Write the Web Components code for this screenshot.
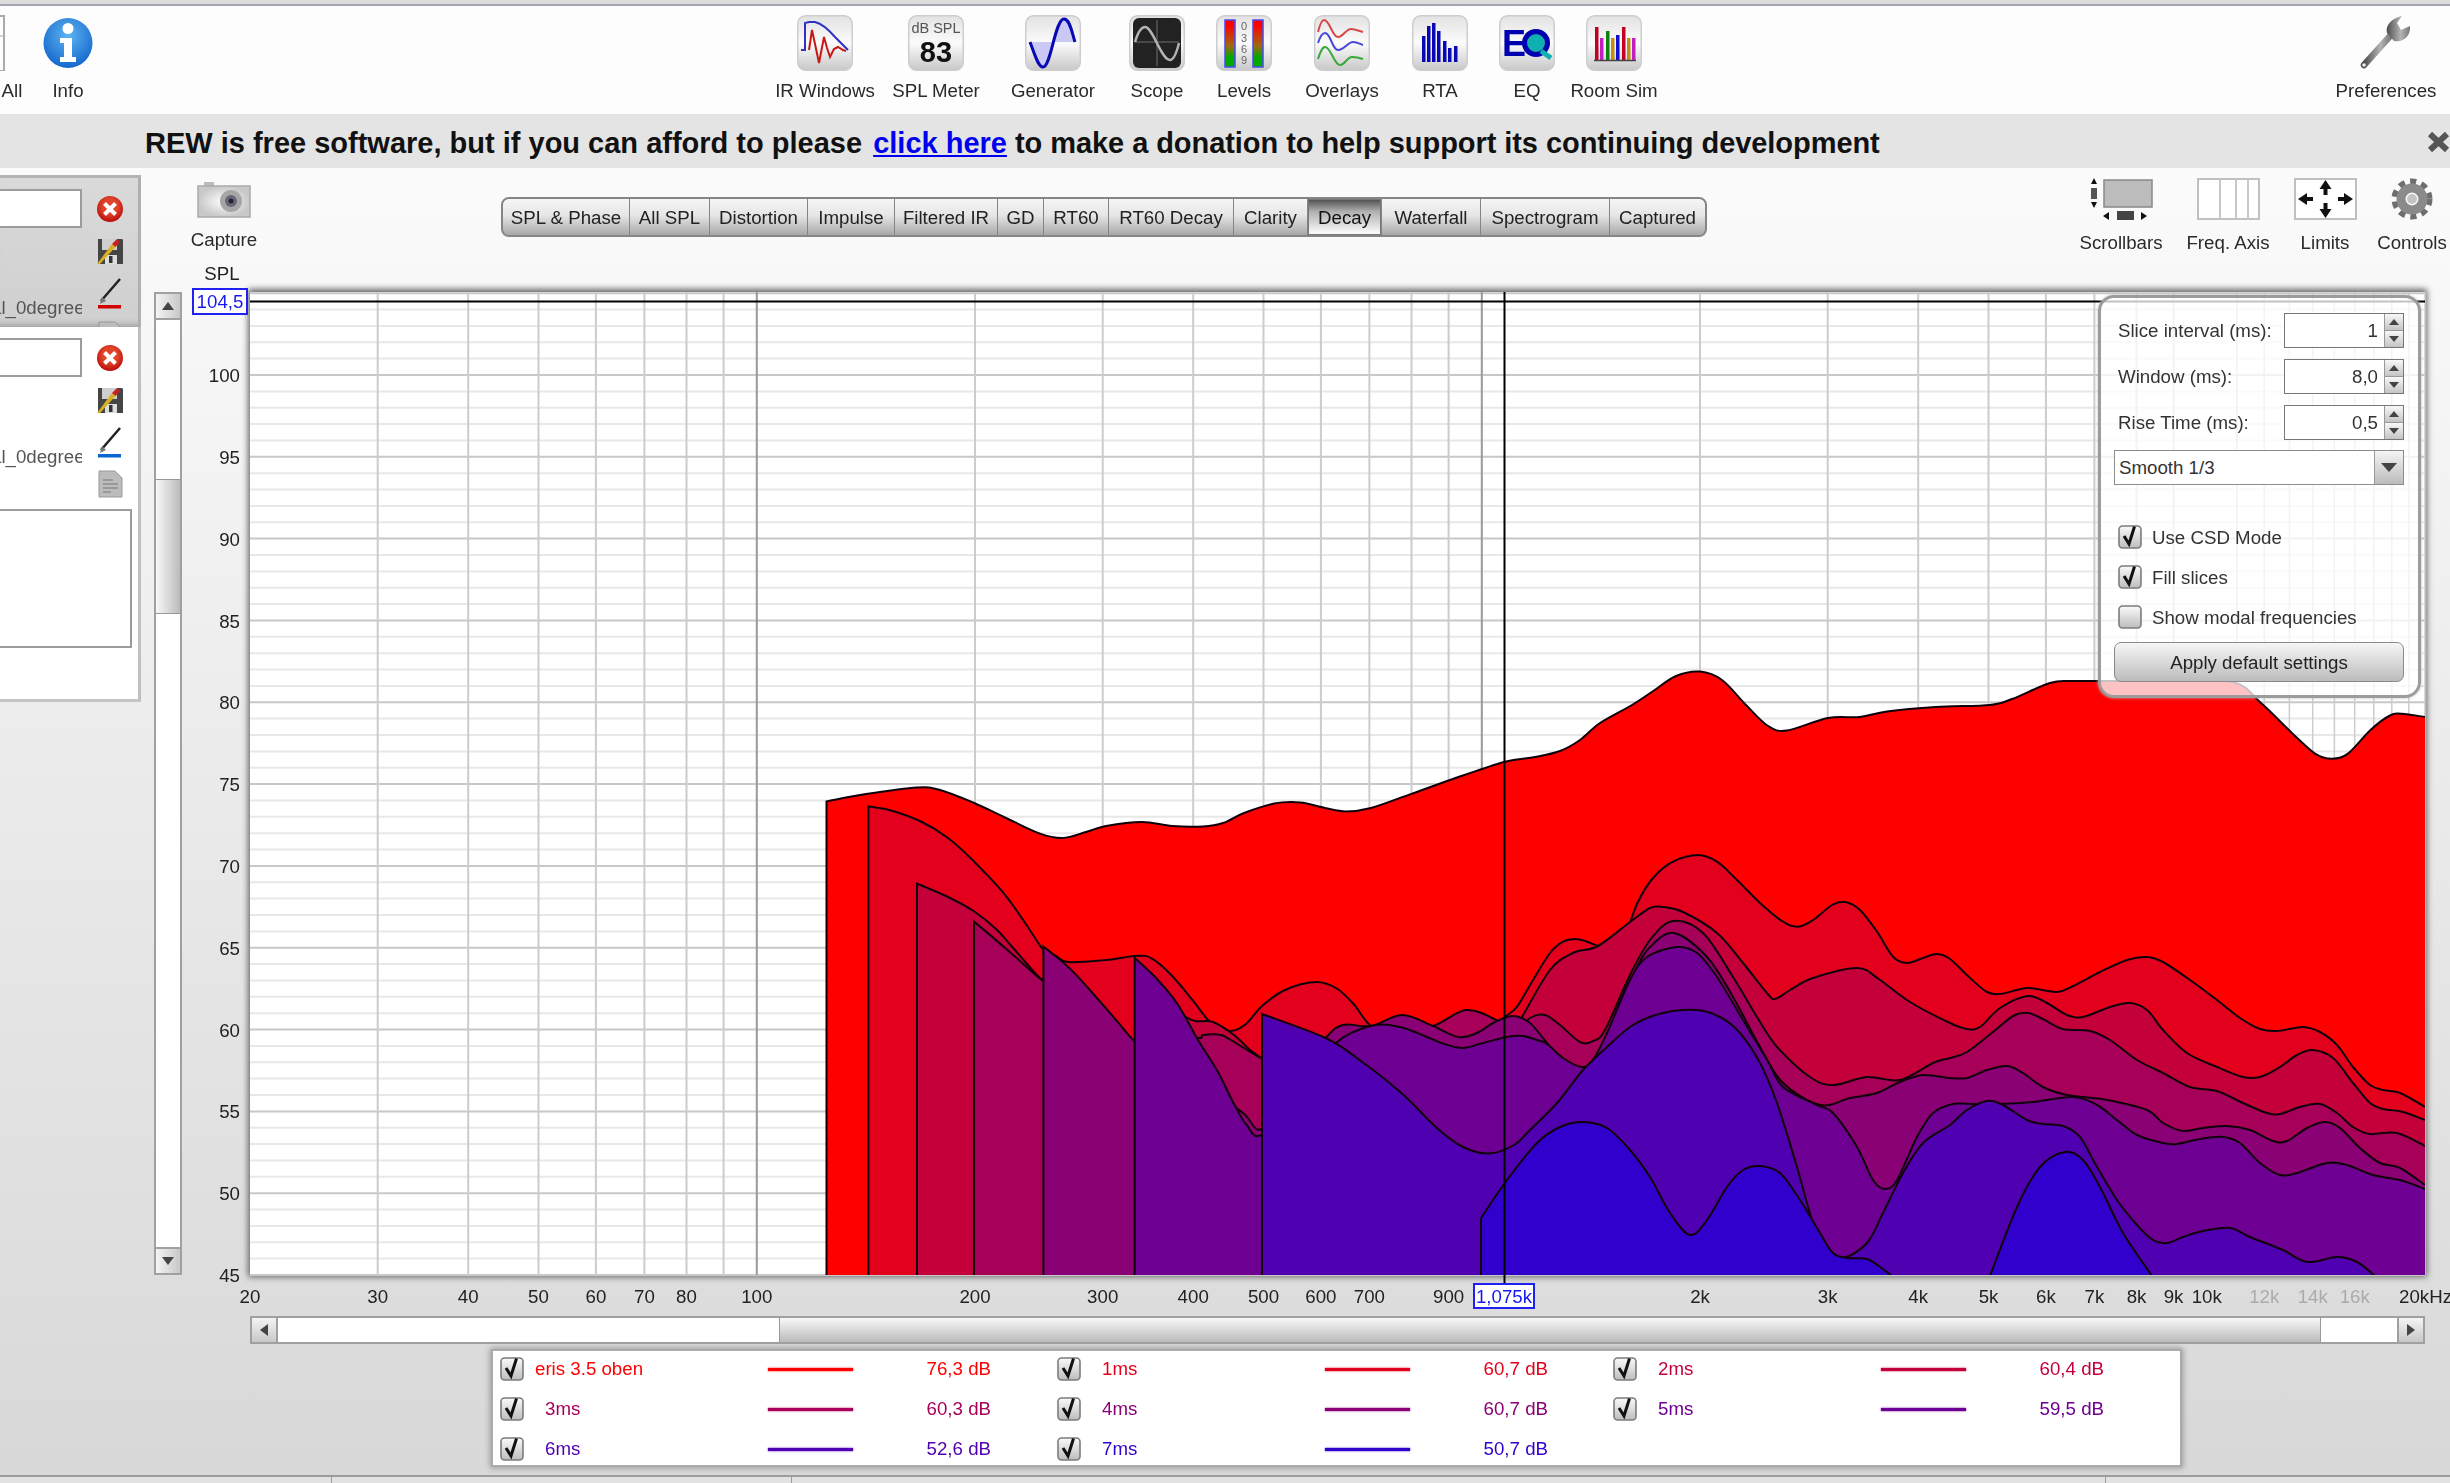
<!DOCTYPE html>
<html>
<head>
<meta charset="utf-8">
<title>REW</title>
<style>
  html, body { margin: 0; padding: 0; }
  body {
    width: 2450px; height: 1483px; overflow: hidden;
    font: 18.7px "Liberation Sans", Arial, sans-serif; color: #2a2a2a;
    background: #dcdcdc;
    filter: blur(.45px);
  }
  #main { display: flex; height: 1307px; background: linear-gradient(#fbfbfb, #d8d8d8); }
  #side { width: 154px; flex: none; padding-top: 7px; box-sizing: border-box; overflow: hidden; }
  #work { flex: 1; display: flex; flex-direction: column; min-width: 0; }
  #head { display: flex; height: 102px; flex: none; align-items: flex-start; }
  #chart-row { display: flex; height: 1046px; flex: none; }
</style>
</head>
<body>
<rew-toolbar>
  <rew-tool label="All" icon="all" w="62" gap="9" style="margin-left:-19px"></rew-tool>
  <rew-tool label="Info" icon="info" w="50" gap="9"></rew-tool>
  <rew-tool label="IR Windows" icon="ir" w="120" gap="9" style="margin-left:672px"></rew-tool>
  <rew-tool label="SPL Meter" icon="spl" w="102" gap="9"></rew-tool>
  <rew-tool label="Generator" icon="gen" w="132" gap="9"></rew-tool>
  <rew-tool label="Scope" icon="scope" w="76" gap="9"></rew-tool>
  <rew-tool label="Levels" icon="levels" w="98" gap="9"></rew-tool>
  <rew-tool label="Overlays" icon="overlays" w="98" gap="9"></rew-tool>
  <rew-tool label="RTA" icon="rta" w="98" gap="9"></rew-tool>
  <rew-tool label="EQ" icon="eq" w="76" gap="9"></rew-tool>
  <rew-tool label="Room Sim" icon="room" w="98" gap="9"></rew-tool>
  <rew-tool label="Preferences" icon="wrench" w="104" gap="9" style="margin-left:auto;margin-right:12px"></rew-tool>
</rew-toolbar>
<rew-banner></rew-banner>
<div id="main">
  <div id="side">
    <rew-measure pen="#d40000" style="height:152px"></rew-measure>
    <rew-measure pen="#0a66d0" selected style="height:375px"></rew-measure>
  </div>
  <div id="work">
    <div id="head">
      <rew-tool label="Capture" icon="camera" w="70" gap="11" style="margin:14px 0 0 35px"></rew-tool>
      <rew-tabs style="margin:29px 0 0 242px">
        <rew-tab w="129">SPL &amp; Phase</rew-tab>
        <rew-tab w="80">All SPL</rew-tab>
        <rew-tab w="98">Distortion</rew-tab>
        <rew-tab w="87">Impulse</rew-tab>
        <rew-tab w="103">Filtered IR</rew-tab>
        <rew-tab w="46">GD</rew-tab>
        <rew-tab w="65">RT60</rew-tab>
        <rew-tab w="125">RT60 Decay</rew-tab>
        <rew-tab w="74">Clarity</rew-tab>
        <rew-tab w="74" selected>Decay</rew-tab>
        <rew-tab w="99">Waterfall</rew-tab>
        <rew-tab w="129">Spectrogram</rew-tab>
        <rew-tab w="97">Captured</rew-tab>
      </rew-tabs>
      <rew-tool label="Scrollbars" icon="scrollbars" w="106" gap="12" style="margin:10px 0 0 361px"></rew-tool>
      <rew-tool label="Freq. Axis" icon="freq" w="108" gap="12" style="margin-top:10px"></rew-tool>
      <rew-tool label="Limits" icon="limits" w="86" gap="12" style="margin-top:10px"></rew-tool>
      <rew-tool label="Controls" icon="gear" w="76" gap="12" style="margin:10px 0 0 6px"></rew-tool>
    </div>
    <div id="chart-row">
      <rew-scrollbar dir="v" before="159" thumb="135" style="margin-top:22px"></rew-scrollbar>
      <rew-chart>
        <rew-settings></rew-settings>
      </rew-chart>
    </div>
    <rew-scrollbar dir="h" before="501" thumb="1542" style="margin-left:96px"></rew-scrollbar>
    <rew-legend style="margin:7px 0 0 339px">
      <rew-trace name="eris 3.5 oben" value="76,3 dB" color="#ff0000" pad="11"></rew-trace>
      <rew-trace name="1ms" value="60,7 dB" color="#e2001d"></rew-trace>
      <rew-trace name="2ms" value="60,4 dB" color="#c4003b"></rew-trace>
      <rew-trace name="3ms" value="60,3 dB" color="#a70058"></rew-trace>
      <rew-trace name="4ms" value="60,7 dB" color="#8a0075"></rew-trace>
      <rew-trace name="5ms" value="59,5 dB" color="#6d0092"></rew-trace>
      <rew-trace name="6ms" value="52,6 dB" color="#4f00b0"></rew-trace>
      <rew-trace name="7ms" value="50,7 dB" color="#3200cd"></rew-trace>
    </rew-legend>
  </div>
</div>
<rew-status></rew-status>

<script>
    const tile = (inner, bg) => `<svg width="56" height="56" viewBox="0 0 56 56">
      <defs><linearGradient id="tg" x1="0" y1="0" x2="0" y2="1">
        <stop offset="0" stop-color="#e2e2e2"/><stop offset=".5" stop-color="#fbfbfb"/><stop offset="1" stop-color="#c8c8c8"/>
      </linearGradient></defs>
      <rect x=".75" y=".75" width="54.5" height="54.5" rx="8" fill="url(#tg)" stroke="#cdcdcd" stroke-width="1.5"/>${inner}</svg>`;

    const bars = (list) => list.map(b => `<rect x="${b[0]}" y="${b[1]}" width="${b[2]}" height="${b[3] - b[1]}" fill="${b[4]}"/>`).join('');

    const ICONS = {
        all: `<svg width="62" height="56"><rect x="-30" y="1" width="53" height="55" fill="#fdfdfd" stroke="#aaa" stroke-width="2"/><path d="M18 21h4" stroke="#aaa"/></svg>`,
        info: `<svg width="50" height="56" viewBox="0 0 50 56">
          <defs><radialGradient id="ib" cx=".5" cy=".35" r=".7"><stop offset="0" stop-color="#5db4f2"/><stop offset="1" stop-color="#0f62c9"/></radialGradient></defs>
          <ellipse cx="25" cy="28" rx="24.5" ry="25" fill="url(#ib)"/>
          <circle cx="25" cy="13.5" r="5.5" fill="#fff"/>
          <path d="M17 23h12v19h4v5H17v-5h4V28h-4z" fill="#fff"/></svg>`,
        ir: tile(`<path d="M4 35h4V8l4-1h6c8 2 14 8 20 15l13 13" fill="none" stroke="#3232c0" stroke-width="2"/>
          <path d="M12 35l3-20 3 14 4 19 5-26 3 11 3 9 4-8 4-2 5 3 3 1" fill="none" stroke="#c81818" stroke-width="2"/>`),
        spl: tile(`<text x="28" y="18" font-size="14.5" text-anchor="middle" fill="#555">dB SPL</text>
          <text x="28" y="47" font-size="29" font-weight="700" text-anchor="middle" fill="#111">83</text>`),
        gen: tile(`<path d="M5 27C10 40 13 52 18 52C26 52 30 4 39 4C45 4 47 18 50 27Z" fill="#c9c9f4"/>
          <path d="M5 27C10 40 13 52 18 52C26 52 30 4 39 4C45 4 47 18 50 27" fill="none" stroke="#0808b4" stroke-width="3"/>`),
        scope: tile(`<rect x="4" y="3" width="48" height="50" rx="6" fill="#222"/>
          <path d="M28 5v46M6 27h44" stroke="#555" stroke-width="1.5"/>
          <path d="M6 27C9 17 12 12 16 12C24 12 32 45 41 45C45 45 48 36 50 28" fill="none" stroke="#b4b4b4" stroke-width="2.5"/>`),
        levels: tile(`<defs><linearGradient id="lv" x1="0" y1="0" x2="0" y2="1"><stop offset=".1" stop-color="#ff0000"/><stop offset=".55" stop-color="#a06a10"/><stop offset=".8" stop-color="#00a800"/></linearGradient></defs>
          <rect x="9" y="5" width="10" height="47" fill="url(#lv)" stroke="#4a4af0" stroke-width="1.5"/>
          <rect x="37" y="5" width="10" height="47" fill="url(#lv)" stroke="#4a4af0" stroke-width="1.5"/>
          <g font-size="11" fill="#666" text-anchor="middle"><text x="28" y="15">0</text><text x="28" y="27">3</text><text x="28" y="38">6</text><text x="28" y="49">9</text></g>`),
        overlays: tile(`<g fill="none" stroke-width="2">
          <path d="M4 17C6 9 8 5 10 5C16 5 18 22 24 22C29 22 32 14 37 14C41 14 45 16 49 17" stroke="#d84848"/>
          <path d="M4 28C6 22 8 18 11 18C17 18 18 35 24 35C30 35 34 27 39 27C43 27 46 29 49 30" stroke="#4848d8"/>
          <path d="M4 44C6 38 8 32 11 32C17 32 20 50 26 50C31 50 33 42 38 42C42 42 46 43 49 44" stroke="#38a838"/></g>`),
        rta: tile(bars([[10,21,3.5,47,'#0808b4'],[15,11,3.5,47,'#0808b4'],[20,8,3.5,47,'#0808b4'],[25,16,3.5,47,'#0808b4'],[31,26,3.5,47,'#0808b4'],[36,33,3.5,47,'#0808b4'],[42,31,3.5,47,'#0808b4']])),
        eq: tile(`<text x="3" y="41" font-size="36" font-weight="700" fill="#0000b0">E</text>
          <circle cx="37" cy="28" r="11.5" fill="#10b0b0" stroke="#0000b0" stroke-width="5"/>
          <path d="M42 36l10 7" stroke="#10b0b0" stroke-width="5"/>`),
        room: tile(bars([[9,12,3.5,45,'#c00020'],[14,23,3.5,45,'#c020c0'],[20,16,3.5,45,'#108010'],[25,23,3.5,45,'#c09010'],[30,20,3.5,45,'#1010d0'],[36,12,3.5,45,'#c00020'],[41,23,3.5,45,'#c09010'],[46,23,3.5,45,'#c020c0']]) + `<path d="M8 45.5h42" stroke="#444" stroke-width="1.5"/>`),
        wrench: `<svg width="58" height="56" viewBox="0 0 58 56">
          <defs><linearGradient id="wr" x1="0" y1="0" x2="1" y2="0"><stop offset="0" stop-color="#4c4c4c"/><stop offset=".6" stop-color="#b4b4b4"/><stop offset="1" stop-color="#777"/></linearGradient></defs>
          <path d="M7 50L34 20" stroke="url(#wr)" stroke-width="6.5" stroke-linecap="round"/>
          <path d="M30 18C28 10 35 3 45 1L40 8L44 15L53 11C54 20 47 28 37 26Z" fill="url(#wr)"/>
          <circle cx="7" cy="50" r="1.8" fill="#eee"/></svg>`,
        camera: `<svg width="54" height="36" viewBox="0 0 54 36">
          <defs><radialGradient id="cm"><stop offset="0" stop-color="#fff"/><stop offset="1" stop-color="#c8c8c8"/></radialGradient></defs>
          <rect x="7" y="0" width="10" height="5" fill="#bbb"/>
          <rect x="1" y="4" width="52" height="31" fill="url(#cm)" stroke="#aaa" stroke-width="1.5"/>
          <circle cx="34" cy="19" r="11" fill="#a6a6a6"/><circle cx="34" cy="19" r="6" fill="#667"/><circle cx="34" cy="19" r="2.5" fill="#223"/></svg>`,
        scrollbars: `<svg width="63" height="42" viewBox="0 0 63 42">
          <rect x="14" y="2" width="48" height="27" fill="#bcbcbc" stroke="#888" stroke-width="1.5"/>
          <path d="M4 0l3 6H1zM4 30l3-6H1zM13 38l6-4v8zM57 38l-6-4v8z" fill="#111"/>
          <rect x="1" y="10" width="6" height="11" fill="#555"/><rect x="27" y="33" width="17" height="9" fill="#444"/></svg>`,
        freq: `<svg width="63" height="42" viewBox="0 0 63 42"><rect x="1" y="1" width="61" height="40" fill="#fff" stroke="#c0c0c0" stroke-width="2"/>
          <path d="M23 1v40M39 1v40M51 1v40" stroke="#c8c8c8" stroke-width="2"/></svg>`,
        limits: `<svg width="63" height="42" viewBox="0 0 63 42"><rect x="1" y="1" width="61" height="40" fill="#fff" stroke="#c0c0c0" stroke-width="2"/>
          <path d="M31.5 2l6 9h-4v6h-4v-6h-4zM31.5 40l6-9h-4v-6h-4v6h-4zM4 21l9-6v4h6v4h-6v4zM59 21l-9-6v4h-6v4h6v4z" fill="#111"/></svg>`,
        gear: `<svg width="42" height="42" viewBox="0 0 42 42"><circle cx="21" cy="21" r="17" fill="none" stroke="#6e6e6e" stroke-width="7" stroke-dasharray="6 5.1"/>
          <circle cx="21" cy="21" r="11" fill="none" stroke="#8a8a8a" stroke-width="9"/><circle cx="21" cy="21" r="5" fill="#c4c4c4"/></svg>`
    };

    // A toolbar button: an icon over its caption
    class RewTool extends HTMLElement {
        connectedCallback() {
            const gap = this.getAttribute('gap') || 9;
            this.attachShadow({mode: 'open'}).innerHTML = `
            <style>
                :host { display: flex; flex-direction: column; align-items: center; flex: none; width: ${this.getAttribute('w')}px; gap: ${gap}px; }
                svg { display: block; flex: none; }
                span { line-height: 22px; white-space: nowrap; color: #2a2a2a; }
            </style>
            ${ICONS[this.getAttribute('icon')]}<span>${this.getAttribute('label')}</span>`;
        }
    }

    class RewToolbar extends HTMLElement {
        constructor() {
            super();
            this.attachShadow({mode: 'open'}).innerHTML = `
            <style>
                :host { display: flex; box-sizing: border-box; height: 110px; margin-top: 4px; padding-top: 9px; background: #fdfdfd; border-top: 2px solid #a4a4b2; }
            </style><slot></slot>`;
        }
    }

    class RewBanner extends HTMLElement {
        constructor() {
            super();
            this.attachShadow({mode: 'open'}).innerHTML = `
            <style>
                :host { display: flex; align-items: center; height: 54px; padding-left: 145px; background: #e4e4e4; box-sizing: border-box;
                        font-size: 29px; font-weight: 700; color: #111; white-space: nowrap; position: relative; }
                .msg { margin-top: 4px; }
                a { color: #0000f0; text-decoration: underline; margin: 0 0 0 3px; }
                .rest { letter-spacing: -.06px; }
                svg { position: absolute; left: 2427px; top: 17px; }
            </style>
            <span class="msg">REW is free software, but if you can afford to please <a href="#">click here</a><span class="rest"> to make a donation to help support its continuing development</span></span>
            <svg width="24" height="22"><path d="M3 3l17 16M20 3L3 19" stroke="#555" stroke-width="6"/></svg>`;
        }
    }

    class RewMeasure extends HTMLElement {
        connectedCallback() {
            const pen = this.getAttribute('pen');
            this.attachShadow({mode: 'open'}).innerHTML = `
            <style>
                :host { display: block; width: 141px; box-sizing: border-box; overflow: hidden; padding-top: 11px;
                        border-right: 3px solid #b0b0b0; background: linear-gradient(#dadada, #cfcfcf);
                        border-top: 3px solid #b4b4b4; box-shadow: inset 0 -8px 6px -6px #999; }
                :host([selected]) { background: #fff; border-top: 0; border-bottom: 3px solid #c4c4c4; box-shadow: none; border-right-color: #c0c0c0; }
                .top { display: grid; grid-template-columns: 82px 56px; height: 171px; }
                .left { display: flex; flex-direction: column; }
                .text { height: 39px; border: 2px solid #9c9c9c; border-left: 0; box-sizing: border-box; background: #fff; }
                .name { margin-top: 69px; line-height: 22px; white-space: nowrap; overflow: hidden; color: #555; width: 82px; text-indent: -9px; }
                .icons { display: flex; flex-direction: column; align-items: center; }
                .icons svg { flex: none; display: block; }
                .big { height: 139px; width: 132px; border: 2px solid #9c9c9c; border-left: 0; box-sizing: border-box; background: #fff; margin-top: 0; }
            </style>
            <div class="top">
              <div class="left"><div class="text"></div><div class="name">al_0degrees</div></div>
              <div class="icons">
                <svg width="28" height="28" viewBox="0 0 28 28" style="margin-top:6px">
                  <defs><radialGradient id="del" cx=".5" cy=".4" r=".6"><stop offset=".5" stop-color="#e04428"/><stop offset="1" stop-color="#b80c0c"/></radialGradient></defs>
                  <circle cx="14" cy="14" r="13" fill="url(#del)"/><path d="M8.5 8.5l11 11M19.5 8.5l-11 11" stroke="#fff" stroke-width="4"/></svg>
                <svg width="28" height="27" viewBox="0 0 28 27" style="margin-top:15px">
                  <path d="M2 1h24l1 1v24H2z" fill="#454545"/><rect x="6" y="1" width="15" height="11" fill="#cfcfcf"/><rect x="9" y="17" width="12" height="9" fill="#ddd"/><rect x="13" y="18" width="3.5" height="7" fill="#333"/>
                  <path d="M1 26l15-20 3.5 3L4 26z" fill="#d8b020"/><path d="M16 6l5-5 3 3-4.5 5z" fill="#c82020"/></svg>
                <svg width="28" height="36" viewBox="0 0 28 36" style="margin-top:12px">
                  <path d="M5 24L24 2" stroke="#222" stroke-width="2.5"/><path d="M6 20l4 4-6 3z" fill="#777"/>
                  <rect x="2" y="28" width="23" height="3.5" fill="${pen}"/></svg>
                <svg width="25" height="28" viewBox="0 0 25 28" style="margin-top:8px">
                  <path d="M1 1h16l7 7v19H1z" fill="#bcbcbc" stroke="#999"/><path d="M5 10h10M5 14h15M5 18h15M5 22h8" stroke="#8c8c8c" stroke-width="1.5"/></svg>
              </div>
            </div>
            <div class="big"></div>`;
        }
    }

    class RewTabs extends HTMLElement {
        constructor() {
            super();
            this.attachShadow({mode: 'open'}).innerHTML = `
            <style>
                :host { display: flex; flex: none; height: 40px; box-sizing: border-box; border: 2px solid #858585; border-radius: 8px; overflow: hidden; background: #aaa; }
            </style><slot></slot>`;
        }
    }

    class RewTab extends HTMLElement {
        connectedCallback() {
            this.attachShadow({mode: 'open'}).innerHTML = `
            <style>
                :host { display: flex; align-items: center; justify-content: center; flex: none; box-sizing: border-box; width: ${this.getAttribute('w')}px;
                        background: linear-gradient(#f6f6f6 0%, #e6e6e6 45%, #a8a8a8 100%); border-right: 1.5px solid #858585; color: #222; white-space: nowrap; padding-top: 1px; }
                :host(:first-child) { width: calc(${this.getAttribute('w')}px - 2px); }
                :host(:last-child) { border-right: 0; width: calc(${this.getAttribute('w')}px - 2px); }
                :host([selected]) { background: linear-gradient(#4c4c4c 0%, #b0b0b0 35%, #eee 85%, #fff 100%); box-shadow: inset 0 0 0 1px #777; color: #111; }
            </style><slot></slot>`;
        }
    }

    class RewScrollbar extends HTMLElement {
        connectedCallback() {
            const v = this.getAttribute('dir') === 'v';
            const before = this.getAttribute('before'), thumb = this.getAttribute('thumb');
            const size = v ? 'height' : 'width';
            const grad = v ? 'to right' : 'to bottom';
            const tri = (d) => `<svg width="16" height="16" viewBox="0 0 16 16"><path d="${d}" fill="#444"/></svg>`;
            this.attachShadow({mode: 'open'}).innerHTML = `
            <style>
                :host { display: flex; flex: none; flex-direction: ${v ? 'column' : 'row'}; box-sizing: border-box;
                        ${v ? 'width: 28px; height: 983px;' : 'width: 2175px; height: 28px;'} border: 2px solid #a0a0a0; background: #fff; }
                .btn { flex: none; ${v ? 'height: 24px' : 'width: 24px'}; display: flex; align-items: center; justify-content: center;
                       background: linear-gradient(${grad}, #f4f4f4, #c8c8c8); }
                .btn.a { ${v ? 'border-bottom' : 'border-right'}: 2px solid #a0a0a0; }
                .btn.b { ${v ? 'border-top' : 'border-left'}: 2px solid #a0a0a0; }
                .track { flex: 1; display: flex; flex-direction: ${v ? 'column' : 'row'}; }
                .thumb { flex: none; ${size}: ${thumb}px; margin-${v ? 'top' : 'left'}: ${before}px; background: linear-gradient(${grad}, #f8f8f8, #bbb);
                         border-${v ? 'top' : 'left'}: 1px solid #999; border-${v ? 'bottom' : 'right'}: 1px solid #999; box-sizing: border-box; }
            </style>
            <div class="btn a">${tri(v ? 'M8 4l6 8H2z' : 'M4 8l8-6v12z')}</div>
            <div class="track"><div class="thumb"></div></div>
            <div class="btn b">${tri(v ? 'M8 12l6-8H2z' : 'M12 8L4 2v12z')}</div>`;
        }
    }

    // frequency and level scales of the plot, in page pixels
    const fx = f => 250 + 725 * Math.log10(f / 20);
    const dy = db => 375 + (100 - db) * 16.3636;

    const BOTTOM = 1276;

    const SLICES = [
        ['#ff0000', [[826.5,801.4],[866,794],[917,787.5],[940,790],[973,802.5],[1004,817],[1040,833.6],[1063,838],[1086,832],[1106,826],[1142,822],[1172,826],[1203,826.4],[1223,823],[1244,813],[1274,803.6],[1300,802.5],[1325,808],[1346,811.4],[1371,808],[1412,793.6],[1453,779],[1504,762],[1535,757],[1560,751],[1580,740],[1600,723],[1632,705],[1654,690.5],[1676,676],[1700,671.6],[1722,680],[1746,705],[1768,726],[1787,730.5],[1828,718],[1860,717],[1887,711.5],[1936,707],[1990,705],[2012,699],[2050,683],[2071,681],[2099,681],[2170,681],[2233,682],[2261,703],[2294,735],[2315,753.6],[2332,758.7],[2348,753.6],[2370,730.5],[2389,716],[2402,713.7],[2425,717]]],
        ['#e2001d', [[868.4,806.4],[892,810.7],[922,822],[948,838],[973.5,861],[1004,893.6],[1024.5,922],[1044,950.7],[1056,956],[1068,962],[1106,960],[1137,955.7],[1152,958.6],[1172,975.7],[1193,1000.7],[1208,1020],[1218,1026],[1231,1031],[1246,1024],[1262,1006],[1285,990],[1315,982],[1336,988],[1353.6,1004],[1371,1026],[1400,1040],[1450,1040],[1490,1030],[1505,1016.7],[1517,1006.7],[1533,980],[1550,953],[1563,941.7],[1575,939],[1587,941.7],[1598,946],[1612,950],[1625,935],[1638,901.7],[1653,878],[1673,861.7],[1698,855],[1717,861.7],[1737,880],[1760,903],[1783,921.7],[1798,926.7],[1813,920],[1832,905],[1845,902],[1860,910],[1877,931.7],[1893,956.7],[1907,963],[1923,958],[1937,954],[1950,959],[1970,978],[1987,992],[2000,994],[2017,990],[2030,988],[2057,992],[2073,986],[2100,972],[2127,960],[2147,957],[2163,962],[2190,980],[2217,1000],[2240,1018],[2260,1029],[2277,1031],[2303,1027],[2320,1032],[2337,1045],[2353,1067],[2370,1085],[2383,1090],[2397,1092],[2410,1098],[2425,1107]]],
        ['#c4003b', [[917,883.6],[948,897],[973.5,911],[996,929],[1014,949],[1042,980],[1070,1000],[1100,1025],[1130,1060],[1145,1020],[1177,1015],[1195,1021],[1213,1022],[1234,1035],[1249,1049],[1262,1059],[1300,1090],[1400,1060],[1500,1040],[1515,1027],[1522,1017],[1550,970],[1573,953],[1598,946],[1630,922],[1650,908],[1663,907],[1683,912],[1717,933],[1743,963],[1767,993],[1775,999],[1790,990],[1813,978],[1857,968],[1880,980],[1910,1002],[1950,1023],[1967,1029],[1980,1027],[2000,1008],[2028,996],[2047,1003],[2067,1015],[2083,1017],[2110,1007],[2130,1003],[2147,1010],[2163,1030],[2187,1053],[2217,1067],[2243,1077],[2260,1077],[2280,1067],[2297,1055],[2313,1050],[2333,1058],[2353,1083],[2370,1103],[2383,1109],[2403,1112],[2425,1120]]],
        ['#a70058', [[974,921.4],[1004,947],[1024.5,965],[1043,981],[1070,1000],[1100,1030],[1130,1065],[1145,1040],[1177,1035],[1200,1038],[1203,1035],[1221,1035],[1239,1045],[1262,1059],[1300,1080],[1350,1040],[1400,1030],[1433,1026],[1466,1010],[1496,1020],[1513,1035],[1530,1018],[1545,1015],[1560,1025],[1580,1042],[1593,1041],[1605,1030],[1630,975],[1650,940],[1673,921],[1703,933],[1733,977],[1757,1017],[1777,1047],[1810,1077],[1833,1085],[1867,1077],[1900,1080],[1933,1063],[1950,1058],[1967,1052],[1993,1032],[2013,1016],[2028,1013],[2043,1019],[2063,1029],[2090,1031],[2110,1040],[2137,1060],[2163,1073],[2190,1087],[2217,1091],[2243,1103],[2267,1113],[2280,1114],[2300,1107],[2320,1104],[2337,1113],[2353,1127],[2370,1134],[2397,1133],[2425,1146]]],
        ['#8a0075', [[1043.4,946.4],[1070,968.6],[1096,997],[1116,1020],[1135,1042],[1170,1075],[1210,1090],[1243,1113],[1262,1128.6],[1290,1080],[1325.5,1038],[1343,1025],[1371,1026],[1402,1015],[1433,1026],[1458,1037],[1477,1033],[1495,1022],[1513,1016],[1530,1023],[1547,1043],[1563,1060],[1582,1072],[1605,1040],[1630,985],[1637,967],[1650,947],[1674,933],[1707,957],[1733,997],[1760,1047],[1783,1083],[1820,1105],[1850,1098],[1877,1093],[1900,1082],[1923,1075],[1950,1078],[1967,1078],[1987,1070],[2007,1066],[2023,1073],[2043,1087],[2067,1095],[2107,1100],[2147,1110],[2163,1123],[2183,1131],[2203,1128],[2227,1126],[2250,1130],[2273,1141],[2287,1141],[2307,1128],[2325,1122],[2340,1128],[2360,1148],[2380,1163],[2400,1168],[2425,1185]]],
        ['#6d0092', [[1134.7,958],[1157,979],[1177.5,1004],[1198,1040],[1218,1072],[1234,1104],[1246,1124],[1262,1134.6],[1300,1090],[1336,1043],[1371,1026],[1402,1027.5],[1443,1043.6],[1463,1048],[1483,1043],[1507,1037],[1523,1036],[1537,1040],[1547,1044],[1563,1058],[1582,1067],[1593,1060],[1607,1033],[1630,980],[1647,957],[1677,947],[1697,953],[1717,977],[1743,1020],[1767,1060],[1783,1087],[1817,1105],[1833,1113],[1857,1147],[1873,1180],[1885,1189],[1897,1180],[1917,1137],[1933,1113],[1953,1104],[1970,1104],[2000,1104],[2033,1102],[2073,1097],[2097,1105],[2117,1120],[2137,1135],[2163,1143],[2177,1144],[2200,1139],[2223,1137],[2240,1143],[2260,1163],[2280,1175],[2297,1173],[2327,1163],[2347,1165],[2373,1175],[2400,1180],[2425,1189]]],
        ['#4f00b0', [[1262,1014],[1325.5,1038],[1361,1061],[1402,1093.6],[1438,1129],[1463,1147],[1489,1153.6],[1514,1145],[1530,1130],[1557,1103],[1583,1070],[1607,1047],[1633,1025],[1663,1013],[1697,1010],[1720,1017],[1740,1033],[1760,1063],[1777,1103],[1797,1167],[1813,1223],[1827,1250],[1843,1258],[1867,1243],[1883,1213],[1903,1173],[1923,1143],[1950,1125],[1967,1110],[1987,1101],[2003,1105],[2027,1120],[2043,1124],[2063,1126],[2080,1137],[2097,1167],[2117,1200],[2137,1225],[2153,1240],[2167,1243],[2183,1237],[2203,1231],[2230,1228],[2250,1237],[2283,1250],[2307,1262],[2337,1257],[2357,1262],[2375,1276]]],
        ['#3200cd', [[1481,1218],[1507,1180],[1537,1143],[1560,1127],[1583,1122],[1607,1128],[1630,1150],[1650,1177],[1670,1213],[1690,1235],[1707,1220],[1727,1187],[1743,1170],[1760,1166],[1780,1173],[1800,1200],[1820,1233],[1833,1253],[1847,1258],[1867,1259],[1880,1267],[1892,1276]]],
        ['#3200cd', [[1990,1276],[2017,1207],[2040,1167],[2065,1152],[2083,1160],[2100,1187],[2123,1233],[2152,1276]]]
    ];

    function spline(p) {
        let d = '';
        for (let i = 0; i < p.length - 1; i++) {
            const a = p[Math.max(i - 1, 0)], b = p[i], c = p[i + 1], e = p[Math.min(i + 2, p.length - 1)];
            d += `C${(b[0] + (c[0] - a[0]) / 6).toFixed(1)} ${(b[1] + (c[1] - a[1]) / 6).toFixed(1)} ${(c[0] - (e[0] - b[0]) / 6).toFixed(1)} ${(c[1] - (e[1] - b[1]) / 6).toFixed(1)} ${c[0]} ${c[1]}`;
        }
        return d;
    }

    function chartSvg() {
        let out = '';
        // grid
        for (let db = 45; db <= 105; db++) {
            const y = dy(db).toFixed(1);
            out += `<path d="M250 ${y}H2425" stroke="${db % 5 ? '#e8e8e8' : '#c8c8c8'}" stroke-width="2"/>`;
        }
        const freqs = [];
        for (const dec of [10, 100, 1000]) for (let k = 1; k < 10; k++) freqs.push(k * dec);
        for (let f = 11000; f <= 20000; f += 1000) freqs.push(f);
        for (const f of freqs) {
            if (f <= 20) continue;
            const x = fx(f).toFixed(1);
            const dark = f === 100 || f === 1000;
            out += `<path d="M${x} 292V1275" stroke="${dark ? '#999' : '#cccccc'}" stroke-width="${f > 10000 ? 1.5 : 2}"/>`;
        }
        // slices, oldest first
        let shapes = '';
        for (const [color, pts] of SLICES) {
            const first = pts[0], last = pts[pts.length - 1];
            const line = `M${first[0]} ${BOTTOM}L${first[0]} ${first[1]}` + spline(pts);
            shapes += `<path d="${line}L${last[0]} ${BOTTOM}Z" fill="${color}"/><path d="${line}" fill="none" stroke="#10000a" stroke-width="2"/>`;
        }
        out += `<g clip-path="url(#plot)">${shapes}</g>`;
        // cursor
        out += `<path d="M250 301.5H2425" stroke="#000" stroke-width="2.2"/><path d="M${fx(1075).toFixed(1)} 292V1283" stroke="#000" stroke-width="2"/>`;
        // level scale
        for (let db = 45; db <= 100; db += 5) out += `<text x="240" y="${(dy(db) + 7).toFixed(1)}" text-anchor="end">${db}</text>`;
        out += `<text x="222" y="280" text-anchor="middle">SPL</text>`;
        out += `<rect x="193" y="289" width="54" height="25" fill="#fff" stroke="#2020f0" stroke-width="2"/><text x="220" y="308" text-anchor="middle" fill="#1818f0">104,5</text>`;
        // frequency scale
        const ticks = [[20,'20'],[30,'30'],[40,'40'],[50,'50'],[60,'60'],[70,'70'],[80,'80'],[100,'100'],[200,'200'],[300,'300'],[400,'400'],[500,'500'],[600,'600'],[700,'700'],[900,'900'],[2000,'2k'],[3000,'3k'],[4000,'4k'],[5000,'5k'],[6000,'6k'],[7000,'7k'],[8000,'8k'],[9000,'9k'],[10000,'10k'],[12000,'12k',1],[14000,'14k',1],[16000,'16k',1]];
        for (const [f, t, dim] of ticks) out += `<text x="${fx(f).toFixed(1)}" y="1303" text-anchor="middle"${dim ? ' fill="#ababab"' : ''}>${t}</text>`;
        out += `<text x="2399" y="1303">20kHz</text>`;
        out += `<rect x="1474" y="1284" width="60" height="24" fill="#fff" stroke="#2020f0" stroke-width="2"/><text x="1504" y="1303" text-anchor="middle" fill="#1818f0">1,075k</text>`;
        return out;
    }

    class RewChart extends HTMLElement {
        constructor() {
            super();
            this.attachShadow({mode: 'open'}).innerHTML = `
            <style>
                :host { display: block; position: relative; flex: none; width: 2268px; height: 1046px; }
                svg { display: block; font-size: 18.7px; fill: #222; overflow: visible; }
            </style>
            <svg width="2268" height="1046" viewBox="182 270 2268 1046">
              <defs>
                <clipPath id="plot"><rect x="250" y="292" width="2175" height="983"/></clipPath>
                <filter id="soft" x="-1%" y="-2%" width="102%" height="104%"><feGaussianBlur stdDeviation="3"/></filter>
              </defs>
              <rect x="248" y="289" width="2179" height="988" fill="#666" filter="url(#soft)"/>
              <rect x="250" y="292" width="2175" height="983" fill="#fff"/>
              ${chartSvg()}
            </svg>
            <slot></slot>`;
        }
    }

    class RewSpinner extends HTMLElement {
        connectedCallback() {
            this.attachShadow({mode: 'open'}).innerHTML = `
            <style>
                :host { display: flex; align-items: center; justify-content: space-between; padding-left: 4px; height: 35px; }
                .box { display: flex; width: 120px; height: 35px; box-sizing: border-box; border: 1.5px solid #777; background: #fff; }
                .val { flex: 1; text-align: right; line-height: 33px; padding-right: 6px; color: #333; }
                .arrows { flex: none; width: 18px; display: flex; flex-direction: column; border-left: 1.5px solid #999; }
                .arrows div { flex: 1; display: flex; align-items: center; justify-content: center; background: linear-gradient(#f8f8f8, #c4c4c4); }
                .arrows div + div { border-top: 1px solid #999; }
                label { color: #333; white-space: nowrap; }
            </style>
            <label>${this.getAttribute('label')}</label>
            <div class="box"><div class="val">${this.getAttribute('value')}</div>
              <div class="arrows">
                <div><svg width="10" height="6"><path d="M5 0l5 6H0z" fill="#444"/></svg></div>
                <div><svg width="10" height="6"><path d="M5 6l5-6H0z" fill="#444"/></svg></div>
              </div></div>`;
        }
    }

    class RewCheck extends HTMLElement {
        connectedCallback() {
            const on = this.hasAttribute('checked');
            const label = this.getAttribute('label');
            this.attachShadow({mode: 'open'}).innerHTML = `
            <style>
                :host { display: flex; align-items: center; gap: 10px; height: 24px; flex: none; }
                svg { display: block; flex: none; overflow: visible; }
                span { color: #333; white-space: nowrap; margin-top: 1px; }
            </style>
            <svg width="24" height="24" viewBox="0 0 24 24">
              <defs><linearGradient id="cb" x1="0" y1="0" x2="0" y2="1"><stop offset="0" stop-color="#fafafa"/><stop offset="1" stop-color="#bdbdbd"/></linearGradient></defs>
              <rect x="1" y="1" width="22" height="22" rx="3.5" fill="url(#cb)" stroke="#7c7c7c" stroke-width="1.6"/>
              ${on ? '<path d="M6 11l5 8L16.5 1.5" fill="none" stroke="#111" stroke-width="3"/>' : ''}
            </svg>${label ? `<span>${label}</span>` : ''}`;
        }
    }

    class RewSettings extends HTMLElement {
        constructor() {
            super();
            this.attachShadow({mode: 'open'}).innerHTML = `
            <style>
                :host { position: absolute; left: 1916px; top: 25px; width: 323px; height: 403px; box-sizing: border-box; display: flex; flex-direction: column;
                        padding: 15px 14px 0 13px; border: 3.5px solid #9c9c9c; border-radius: 16px; background: rgba(255,255,255,.76); box-shadow: 0 0 3px #bbb; }
                .combo { display: flex; height: 35px; box-sizing: border-box; border: 1.5px solid #8c8c8c; background: #fff; margin-top: 10px; flex: none; }
                .combo span { flex: 1; padding-left: 4px; line-height: 33px; color: #333; }
                .combo div { width: 28px; flex: none; border-left: 1.5px solid #999; display: flex; align-items: center; justify-content: center; background: linear-gradient(#f4f4f4, #bcbcbc); }
                rew-spinner + rew-spinner { margin-top: 11px; }
                rew-spinner:first-child { margin-top: 0; }
                .checks { padding-left: 4px; margin-top: 40px; display: flex; flex-direction: column; gap: 16px; }
                button { display: block; margin-top: 13px; height: 40px; flex: none; font: inherit; color: #222; border: 1.5px solid #8a8a8a; border-radius: 7px;
                         background: linear-gradient(#f6f6f6, #bcbcbc); padding: 1px 0 0; }
            </style>
            <rew-spinner label="Slice interval (ms):" value="1"></rew-spinner>
            <rew-spinner label="Window (ms):" value="8,0"></rew-spinner>
            <rew-spinner label="Rise Time (ms):" value="0,5"></rew-spinner>
            <div class="combo"><span>Smooth 1/3</span><div><svg width="16" height="9"><path d="M0 0h16L8 9z" fill="#444"/></svg></div></div>
            <div class="checks">
              <rew-check checked label="Use CSD Mode"></rew-check>
              <rew-check checked label="Fill slices"></rew-check>
              <rew-check label="Show modal frequencies"></rew-check>
            </div>
            <button>Apply default settings</button>`;
        }
    }

    class RewLegend extends HTMLElement {
        constructor() {
            super();
            this.attachShadow({mode: 'open'}).innerHTML = `
            <style>
                :host { display: grid; grid-template-columns: 557px 556px 1fr; grid-auto-rows: 36px; row-gap: 4px; flex: none; box-sizing: border-box;
                        width: 1687px; height: 114px; padding-left: 7px; background: #fff; box-shadow: 0 0 0 2px #aaa, 0 0 6px 3px #9a9a9a; }
            </style><slot></slot>`;
        }
    }

    class RewTrace extends HTMLElement {
        connectedCallback() {
            const c = this.getAttribute('color');
            const pad = this.getAttribute('pad') || 21;
            this.attachShadow({mode: 'open'}).innerHTML = `
            <style>
                :host { display: grid; grid-template-columns: 24px 244px 85px 138px; align-items: center; color: ${c}; }
                .name { padding-left: ${pad}px; white-space: nowrap; }
                .line { height: 3px; background: ${c}; box-shadow: 0 0 2px ${c}; }
                .val { text-align: right; white-space: nowrap; }
            </style>
            <rew-check checked></rew-check><div class="name">${this.getAttribute('name')}</div><div class="line"></div><div class="val">${this.getAttribute('value')}</div>`;
        }
    }

    class RewStatus extends HTMLElement {
        constructor() {
            super();
            this.attachShadow({mode: 'open'}).innerHTML = `
            <style>
                :host { display: flex; height: 8px; box-sizing: border-box; border-top: 2px solid #9c9c9c; background: #e2e2e2; }
                div { flex: none; border-right: 1.5px solid #9c9c9c; }
            </style>
            <div style="width:331px"></div><div style="width:459px"></div><div style="width:1313px"></div>`;
        }
    }

    window.customElements.define('rew-tool', RewTool);
    window.customElements.define('rew-toolbar', RewToolbar);
    window.customElements.define('rew-banner', RewBanner);
    window.customElements.define('rew-measure', RewMeasure);
    window.customElements.define('rew-tabs', RewTabs);
    window.customElements.define('rew-tab', RewTab);
    window.customElements.define('rew-scrollbar', RewScrollbar);
    window.customElements.define('rew-chart', RewChart);
    window.customElements.define('rew-spinner', RewSpinner);
    window.customElements.define('rew-check', RewCheck);
    window.customElements.define('rew-settings', RewSettings);
    window.customElements.define('rew-legend', RewLegend);
    window.customElements.define('rew-trace', RewTrace);
    window.customElements.define('rew-status', RewStatus);
</script>
</body>
</html>
